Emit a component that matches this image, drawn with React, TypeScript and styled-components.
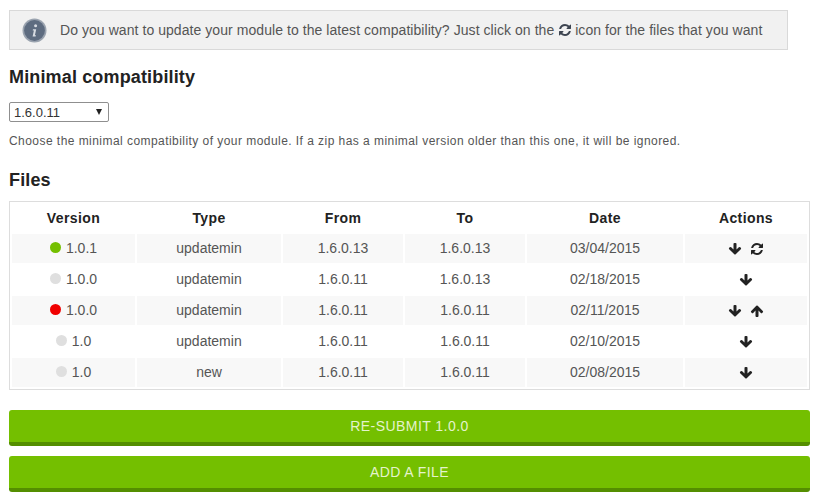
import React from "react";
import styled, { createGlobalStyle } from "styled-components";

const Global = createGlobalStyle`
  html, body { margin: 0; padding: 0; background: #fff; }
  body { font-family: "Liberation Sans", Arial, sans-serif; color: #555; overflow: hidden; }
`;

const Page = styled.div`
  width: 801px;
  padding: 10px 0 0 9px;
`;

const Notice = styled.div`
  width: 779px;
  height: 40px;
  box-sizing: border-box;
  display: flex;
  align-items: center;
  gap: 13px;
  padding-left: 12px;
  background: #f1f1f1;
  border: 1px solid #d9d9d9;
  font-size: 14px;
  letter-spacing: 0.06px;
  color: #555;
  white-space: nowrap;
`;

const InfoBadge = styled.svg`
  width: 25px;
  height: 25px;
  flex: none;
`;

const Glyph = styled.svg<{ $size: number }>`
  display: block;
  width: ${(p) => p.$size}px;
  height: ${(p) => p.$size}px;
  fill: currentColor;
`;

const InlineIcon = styled.span`
  display: inline-block;
  vertical-align: -2px;
  margin: 0 -1px 0 0;
  color: #3d4450;
`;

const Heading = styled.h2`
  margin: 0;
  font-size: 18px;
  line-height: 22px;
  font-weight: 700;
  letter-spacing: 0.15px;
  color: #222;
`;

const CompatHeading = styled(Heading)`
  margin-top: 16px;
`;

const FilesHeading = styled(Heading)`
  margin-top: 20px;
`;

const SelectWrap = styled.div`
  position: relative;
  margin-top: 14px;
  width: 100px;
  height: 20px;
  &::after {
    content: "";
    position: absolute;
    top: 7px;
    right: 7px;
    border-style: solid;
    border-width: 6px 3.5px 0;
    border-color: #222 transparent transparent;
    pointer-events: none;
  }
`;

const VersionSelect = styled.select`
  display: block;
  appearance: none;
  width: 100px;
  height: 20px;
  box-sizing: border-box;
  padding: 0 0 0 4px;
  font-family: "Liberation Sans", Arial, sans-serif;
  font-size: 13px;
  color: #333;
  background: #fff;
  border: 1px solid #8f8f8f;
  border-radius: 2px;
`;

const Help = styled.p`
  margin: 11px 0 0;
  font-size: 12px;
  line-height: 16px;
  letter-spacing: 0.45px;
  color: #555;
  white-space: nowrap;
`;

const TableFrame = styled.div`
  margin-top: 10px;
  height: 189px;
  box-sizing: border-box;
  border: 1px solid #ddd;
`;

const Table = styled.table`
  width: 799px;
  table-layout: fixed;
  border-collapse: separate;
  border-spacing: 2px;
  font-size: 14px;
`;

const Th = styled.th`
  height: 28px;
  padding: 0;
  font-size: 14px;
  font-weight: 700;
  letter-spacing: 0.4px;
  color: #222;
  text-align: center;
`;

const Row = styled.tr<{ $odd: boolean }>`
  td { background: ${(p) => (p.$odd ? "#f8f8f8" : "#fff")}; }
`;

const Td = styled.td`
  height: 29px;
  box-sizing: border-box;
  padding: 0 0 2px;
  text-align: center;
  color: #555;
`;

const Dot = styled.span<{ $color: string }>`
  display: inline-block;
  width: 11px;
  height: 11px;
  border-radius: 50%;
  margin-right: 5px;
  position: relative;
  top: -1px;
  vertical-align: middle;
  background: ${(p) => p.$color};
`;

const Actions = styled.span`
  display: inline-flex;
  align-items: center;
  justify-content: center;
  gap: 8px;
  color: #222;
  vertical-align: middle;
`;

const Buttons = styled.div`
  margin-top: 20px;
  display: flex;
  flex-direction: column;
  gap: 10px;
`;

const Button = styled.button`
  width: 801px;
  height: 36px;
  padding: 0;
  box-sizing: border-box;
  border: 0;
  border-bottom: 4px solid #548e00;
  border-radius: 3px;
  background: #74bf00;
  color: #e4f3cc;
  font-family: "Liberation Sans", Arial, sans-serif;
  font-size: 14px;
  letter-spacing: 0.45px;
  text-transform: uppercase;
`;

const DOWN = "M1675 832q0 53-37 90l-651 652q-39 37-91 37-53 0-90-37l-651-652q-38-36-38-90 0-53 38-91l74-75q39-37 91-37 53 0 90 37l294 294v-704q0-52 38-90t90-38h128q52 0 90 38t38 90v704l294-294q37-37 90-37 52 0 91 37l75 75q37 39 37 91z";
const UP = "M1675 971q0 51-37 90l-75 75q-38 38-91 38-54 0-90-38l-294-293v704q0 52-37.5 84.5t-90.5 32.5h-128q-53 0-90.5-32.5t-37.5-84.5v-704l-294 293q-36 38-90 38t-90-38l-75-75q-38-38-38-90 0-53 38-91l651-651q35-37 90-37 54 0 91 37l651 651q37 39 37 91z";
const REFRESH = "M1639 1056q0 5-1 7-64 268-268 434.5t-478 166.5q-146 0-282.5-55t-243.5-157l-129 129q-19 19-45 19t-45-19-19-45v-448q0-26 19-45t45-19h448q26 0 45 19t19 45-19 45l-137 137q71 66 161 102t187 36q134 0 250-65t186-179q11-17 53-117 8-23 30-23h192q13 0 22.5 9.5t9.5 22.5zm25-800v448q0 26-19 45t-45 19h-448q-26 0-45-19t-19-45 19-45l138-138q-148-137-349-137-134 0-250 65t-186 179q-11 17-53 117-8 23-30 23h-199q-13 0-22.5-9.5t-9.5-22.5v-7q65-268 270-434.5t480-166.5q146 0 284 55.5t245 156.5l130-129q19-19 45-19t45 19 19 45z";

const Icon = ({ d, size = 14 }: { d: string; size?: number }) => (
  <Glyph $size={size} viewBox="0 0 1792 1792"><path d={d} /></Glyph>
);

const widths = [123, 144, 120, 120, 156, 122];
const headers = ["Version", "Type", "From", "To", "Date", "Actions"];

type Rec = { v: string; dot: string; type: string; from: string; to: string; date: string; actions: React.ReactNode };

const rows: Rec[] = [
  { v: "1.0.1", dot: "#74bf00", type: "updatemin", from: "1.6.0.13", to: "1.6.0.13", date: "03/04/2015", actions: <><Icon d={DOWN} /><Icon d={REFRESH} /></> },
  { v: "1.0.0", dot: "#dfdfdf", type: "updatemin", from: "1.6.0.11", to: "1.6.0.13", date: "02/18/2015", actions: <Icon d={DOWN} /> },
  { v: "1.0.0", dot: "#f00000", type: "updatemin", from: "1.6.0.11", to: "1.6.0.11", date: "02/11/2015", actions: <><Icon d={DOWN} /><Icon d={UP} /></> },
  { v: "1.0", dot: "#dfdfdf", type: "updatemin", from: "1.6.0.11", to: "1.6.0.11", date: "02/10/2015", actions: <Icon d={DOWN} /> },
  { v: "1.0", dot: "#dfdfdf", type: "new", from: "1.6.0.11", to: "1.6.0.11", date: "02/08/2015", actions: <Icon d={DOWN} /> },
];

export default function App() {
  return (
    <Page>
      <Global />
      <Notice>
        <InfoBadge viewBox="0 0 25 25">
          <circle cx="12.5" cy="12.5" r="12" fill="#9aa3af" />
          <circle cx="12.5" cy="12.5" r="10.4" fill="#5e6c80" />
          <circle cx="13.6" cy="7.8" r="1.5" fill="#d8dce2" />
          <path d="M11 11.2h3.2l-1.3 6h1.1l-.4 1.3h-3l1.3-6h-1.2z" fill="#d8dce2" />
        </InfoBadge>
        <span>
          Do you want to update your module to the latest compatibility? Just click on the{" "}
          <InlineIcon><Icon d={REFRESH} /></InlineIcon> icon for the files that you want
        </span>
      </Notice>
      <CompatHeading>Minimal compatibility</CompatHeading>
      <SelectWrap>
        <VersionSelect defaultValue="1.6.0.11">
          <option>1.6.0.11</option>
        </VersionSelect>
      </SelectWrap>
      <Help>Choose the minimal compatibility of your module. If a zip has a minimal version older than this one, it will be ignored.</Help>
      <FilesHeading>Files</FilesHeading>
      <TableFrame>
        <Table>
          <colgroup>
            {widths.map((w, i) => <col key={i} style={{ width: w }} />)}
          </colgroup>
          <thead>
            <tr>{headers.map((h) => <Th key={h}>{h}</Th>)}</tr>
          </thead>
          <tbody>
            {rows.map((r, i) => (
              <Row key={i} $odd={i % 2 === 0}>
                <Td><Dot $color={r.dot} />{r.v}</Td>
                <Td>{r.type}</Td>
                <Td>{r.from}</Td>
                <Td>{r.to}</Td>
                <Td>{r.date}</Td>
                <Td><Actions>{r.actions}</Actions></Td>
              </Row>
            ))}
          </tbody>
        </Table>
      </TableFrame>
      <Buttons>
        <Button>Re-submit 1.0.0</Button>
        <Button>Add a file</Button>
      </Buttons>
    </Page>
  );
}
